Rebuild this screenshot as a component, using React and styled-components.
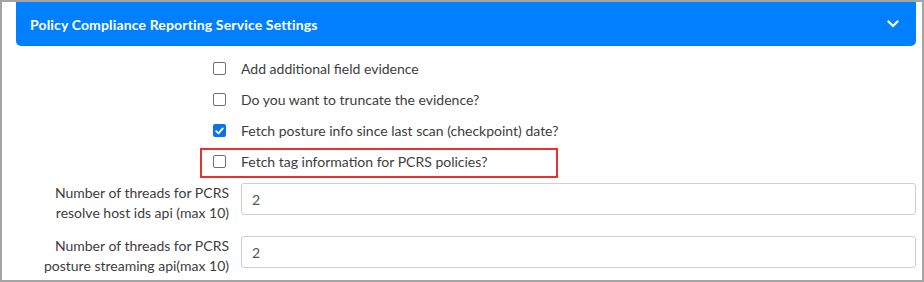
import styled, { createGlobalStyle } from "styled-components";

const GlobalStyle = createGlobalStyle`
  html, body { margin: 0; padding: 0; background: #fff; }
  body { font-family: Lato, "Open Sans", "Liberation Sans", sans-serif; }
  * { box-sizing: border-box; }
`;

const checks = [
  { label: "Add additional field evidence", checked: false },
  { label: "Do you want to truncate the evidence?", checked: false },
  { label: "Fetch posture info since last scan (checkpoint) date?", checked: true },
  { label: "Fetch tag information for PCRS policies?", checked: false, marked: true },
];

const threads = [
  { label: ["Number of threads for PCRS", "resolve host ids api (max 10)"], value: "2" },
  { label: ["Number of threads for PCRS", "posture streaming api(max 10)"], value: "2" },
];

function Chevron() {
  return (
    <svg width="12" height="8" viewBox="0 0 12 8">
      <path d="M1.5 1.5 L6 6 L10.5 1.5" fill="none" stroke="#fff" strokeWidth="2.4" strokeLinecap="round" strokeLinejoin="round" />
    </svg>
  );
}

function Checkbox({ checked }) {
  return (
    <Box $checked={checked}>
      {checked && (
        <svg width="9" height="8" viewBox="0 0 9 8">
          <path d="M1.2 4.2 L3.5 6.4 L7.8 1.4" fill="none" stroke="#fff" strokeWidth="1.8" strokeLinecap="round" strokeLinejoin="round" />
        </svg>
      )}
    </Box>
  );
}

export default function App() {
  return (
    <>
      <GlobalStyle />
      <Frame>
        <Panel>
          <PanelHeader>
            <PanelTitle>Policy Compliance Reporting Service Settings</PanelTitle>
            <Chevron />
          </PanelHeader>
          <Form>
            {checks.map((c) => (
              <CheckRow key={c.label} $marked={c.marked}>
                <Checkbox checked={c.checked} />
                <CheckText>{c.label}</CheckText>
              </CheckRow>
            ))}
            {threads.map((t, i) => (
              <FieldRow key={i}>
                <FieldLabel>
                  {t.label[0]}
                  <br />
                  {t.label[1]}
                </FieldLabel>
                <Input defaultValue={t.value} />
              </FieldRow>
            ))}
          </Form>
        </Panel>
      </Frame>
    </>
  );
}

const Frame = styled.div`
  width: 924px;
  height: 282px;
  border: 2px solid #a4a4a4;
  background: #fff;
  overflow: hidden;
`;

const Panel = styled.div`
  padding: 0 6px 0 14px;
`;

const PanelHeader = styled.div`
  height: 44px;
  background: #0080ff;
  border-radius: 0 0 5px 5px;
  display: flex;
  align-items: center;
  justify-content: space-between;
  padding: 0 17px 0 14px;
`;

const PanelTitle = styled.span`
  color: #fff;
  font-size: 14px;
  font-weight: 700;
  letter-spacing: 0.15px;
`;

const Form = styled.div`
  display: flex;
  flex-direction: column;
  padding-top: 7px;
`;

const CheckRow = styled.div`
  position: relative;
  height: 31px;
  display: flex;
  align-items: center;
  gap: 15px;
  padding-left: 197px;

  ${({ $marked }) =>
    $marked &&
    `
    &::before {
      content: "";
      position: absolute;
      left: 184px;
      top: 2px;
      width: 354px;
      height: 26px;
      border: 2px solid #e8312f;
    }
  `}
`;

const Box = styled.span`
  width: 13px;
  height: 13px;
  border-radius: 2px;
  border: ${({ $checked }) => ($checked ? "none" : "1.5px solid #707070")};
  background: ${({ $checked }) => ($checked ? "#0b72e7" : "#fff")};
  display: inline-flex;
  align-items: center;
  justify-content: center;
  flex: none;
`;

const CheckText = styled.span`
  font-size: 14px;
  color: #3d3d3d;
`;

const FieldRow = styled.div`
  display: grid;
  grid-template-columns: 213px 1fr;
  column-gap: 12px;
  align-items: start;
  margin-top: 6px;
  & + & { margin-top: 13px; }
`;

const FieldLabel = styled.label`
  text-align: right;
  font-size: 14px;
  line-height: 20px;
  color: #3d3d3d;
`;

const Input = styled.input`
  height: 32px;
  border: 1px solid #cfcfcf;
  border-radius: 3px;
  padding: 0 10px;
  font-family: inherit;
  font-size: 14px;
  color: #555;
  outline: none;
`;
